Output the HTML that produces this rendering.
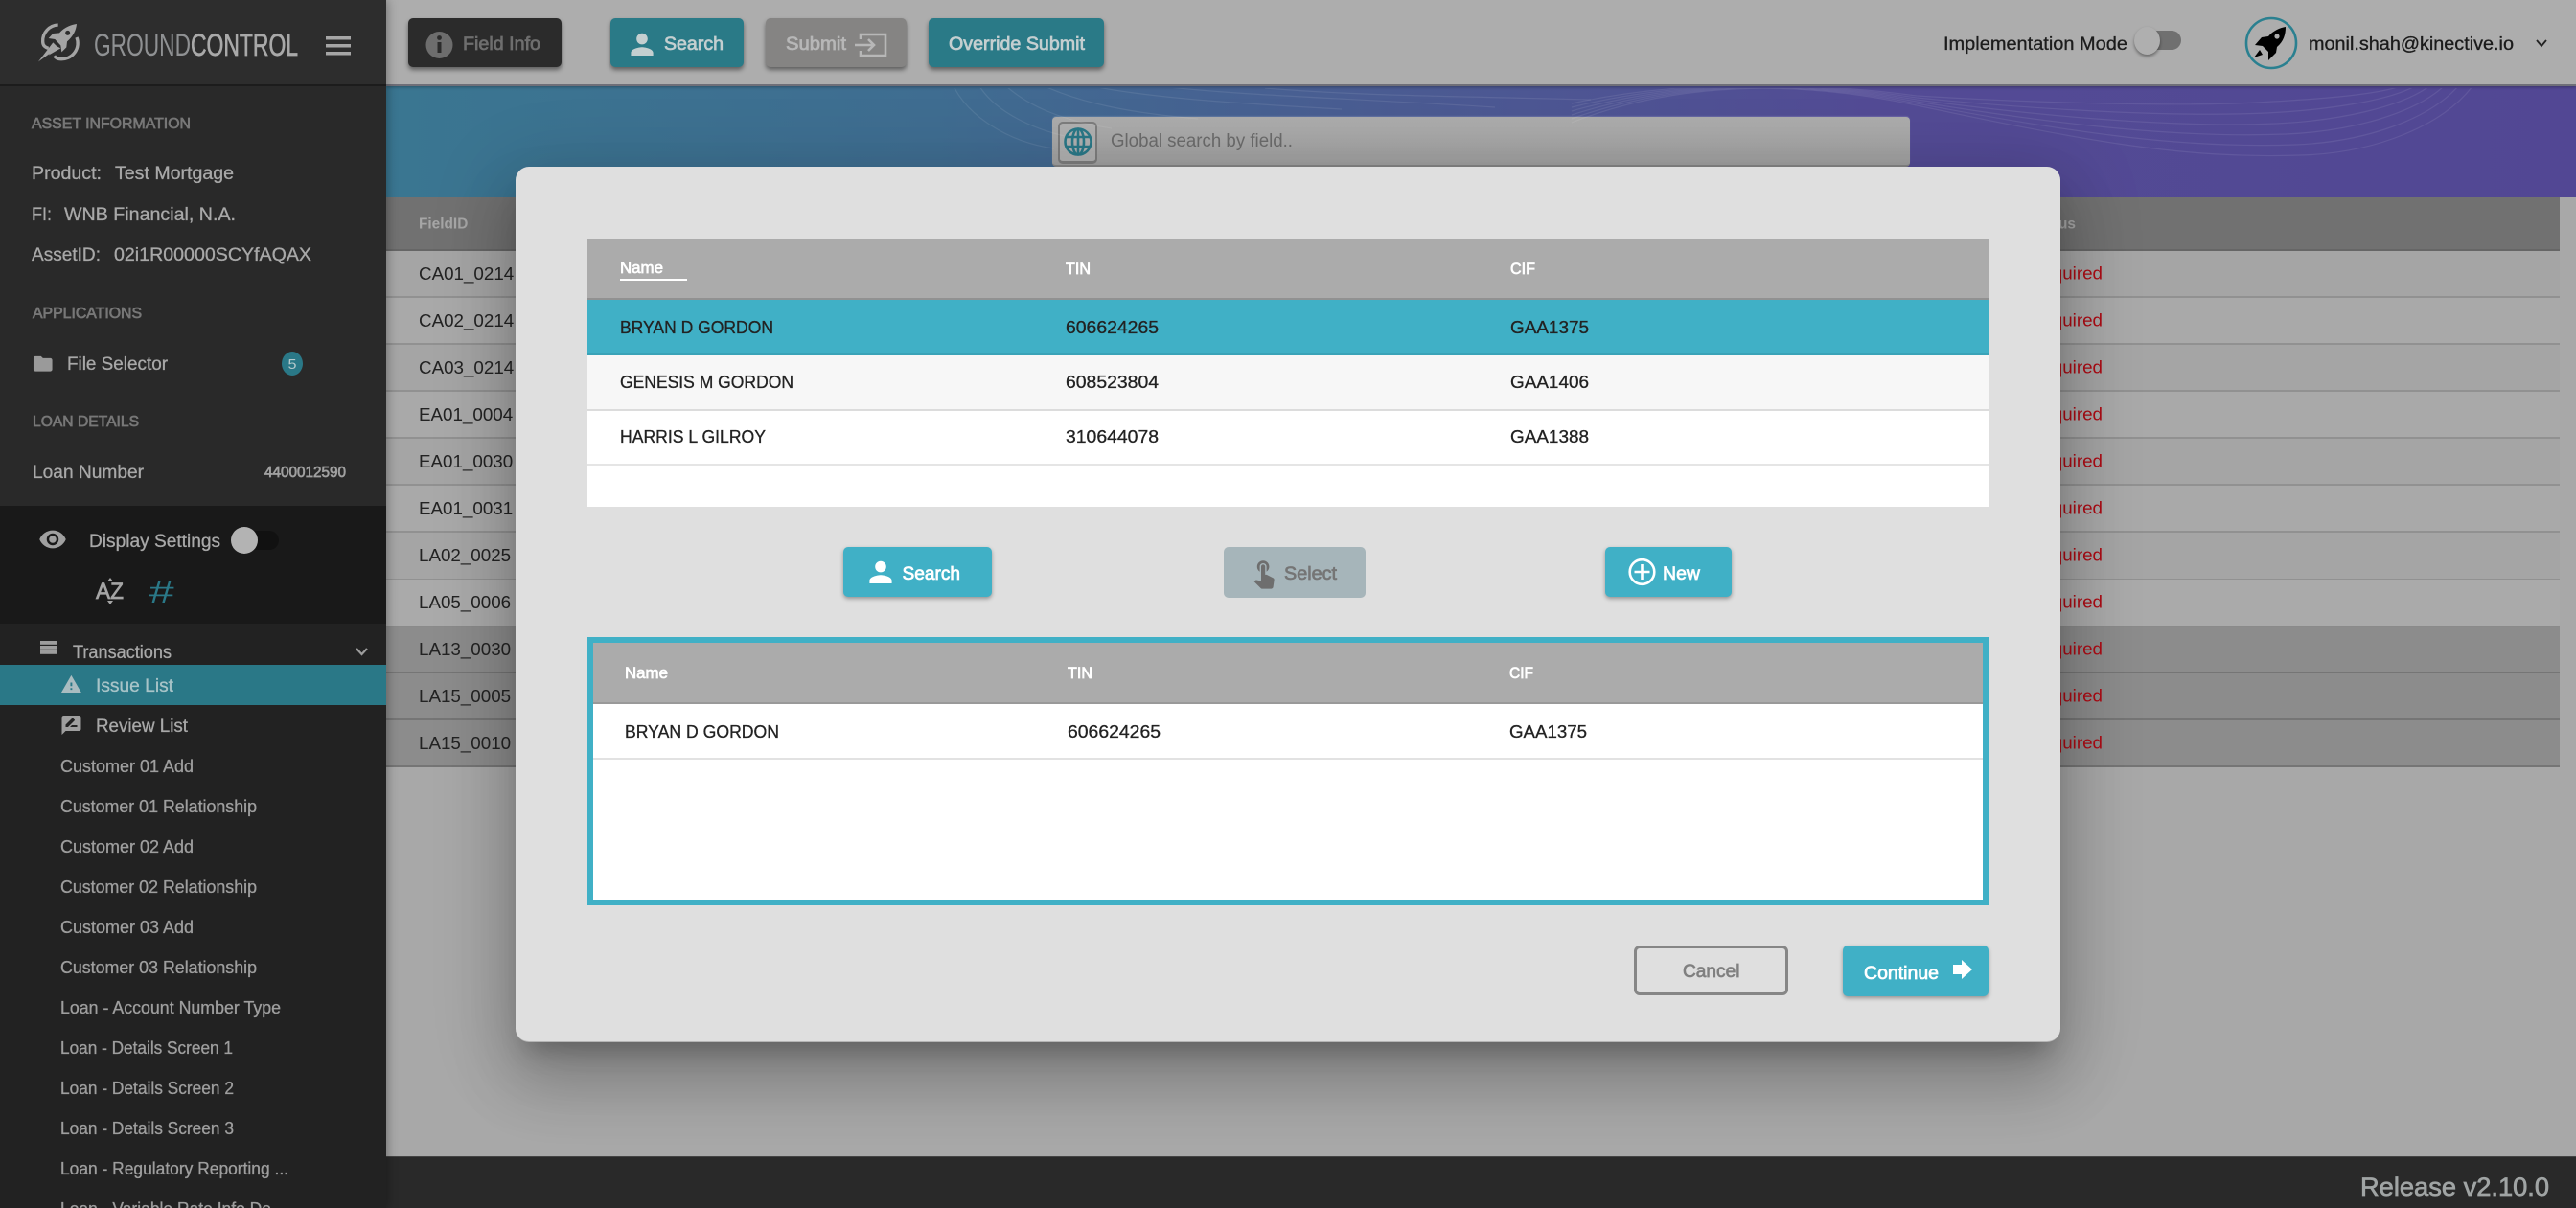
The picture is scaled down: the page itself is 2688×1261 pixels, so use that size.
<!DOCTYPE html>
<html lang="en"><head><meta charset="utf-8"><title>GroundControl</title>
<style>
html,body{margin:0;padding:0;width:2688px;height:1261px;overflow:hidden;background:#a8a8a8}
body{position:relative;font-family:"Liberation Sans",sans-serif}
.b{position:absolute;box-sizing:border-box}
svg.l{position:absolute;left:0;top:0}
svg text{font-family:"Liberation Sans",sans-serif}
.m{stroke-width:.7px;paint-order:stroke}
.r{stroke-width:.3px;paint-order:stroke}
</style></head><body>

<!-- main -->
<div class="b" style="left:403px;top:90px;width:2285px;height:116px;background:linear-gradient(90deg,#3a7691 0%,#3f6d91 25%,#4a5c92 45%,#534b95 68%,#524794 100%)"></div>
<div class="b" style="left:403px;top:206px;width:2268px;height:56px;background:#717171;border-bottom:2px solid #666"></div>
<div class="b" style="left:403px;top:262px;width:2268px;height:49px;background:#a5a5a5;border-bottom:2px solid #919191"></div>
<div class="b" style="left:403px;top:311px;width:2268px;height:49px;background:#a9a9a9;border-bottom:2px solid #919191"></div>
<div class="b" style="left:403px;top:360px;width:2268px;height:49px;background:#a5a5a5;border-bottom:2px solid #919191"></div>
<div class="b" style="left:403px;top:409px;width:2268px;height:49px;background:#a9a9a9;border-bottom:2px solid #919191"></div>
<div class="b" style="left:403px;top:458px;width:2268px;height:49px;background:#a5a5a5;border-bottom:2px solid #919191"></div>
<div class="b" style="left:403px;top:507px;width:2268px;height:49px;background:#a9a9a9;border-bottom:2px solid #919191"></div>
<div class="b" style="left:403px;top:556px;width:2268px;height:49px;background:#a5a5a5;border-bottom:1px solid #919191"></div>
<div class="b" style="left:403px;top:605px;width:2268px;height:49px;background:#aaaaaa;border-bottom:1px solid #8a8a8a"></div>
<div class="b" style="left:403px;top:654px;width:2268px;height:49px;background:#8c8c8c;border-bottom:2px solid #757575"></div>
<div class="b" style="left:403px;top:703px;width:2268px;height:49px;background:#8c8c8c;border-bottom:2px solid #757575"></div>
<div class="b" style="left:403px;top:752px;width:2268px;height:49px;background:#8c8c8c;border-bottom:2px solid #757575"></div>

<!-- footer -->
<div class="b" style="left:403px;top:1207px;width:2285px;height:54px;background:#292929;border-top:1px solid #444"></div>

<!-- header -->
<div class="b" style="left:403px;top:0;width:2285px;height:90px;background:#adadad;border-bottom:2px solid #6f6f78;box-shadow:0 1px 3px rgba(0,0,0,.3)"></div>
<div class="b" style="left:426px;top:19px;width:160px;height:51px;background:#2b2b2b;border-radius:5px;box-shadow:0 3px 5px rgba(0,0,0,.45)"></div>
<div class="b" style="left:637px;top:19px;width:139px;height:51px;background:#2a7a87;border-radius:5px;box-shadow:0 3px 5px rgba(0,0,0,.45)"></div>
<div class="b" style="left:799px;top:19px;width:147px;height:51px;background:#858483;border-radius:5px;box-shadow:0 3px 5px rgba(0,0,0,.45)"></div>
<div class="b" style="left:969px;top:19px;width:183px;height:51px;background:#2a7a87;border-radius:5px;box-shadow:0 3px 5px rgba(0,0,0,.45)"></div>
<div class="b" style="left:2240px;top:32px;width:36px;height:20px;background:#707070;border-radius:10px"></div>
<div class="b" style="left:2227px;top:28px;width:27px;height:29px;background:#afafaf;border-radius:50%;box-shadow:0 2px 3px rgba(0,0,0,.4)"></div>

<!-- global search -->
<div class="b" style="left:1098px;top:122px;width:895px;height:52px;background:linear-gradient(#adadad,#a1a1a1);border-radius:4px;border-bottom:2px solid #858585;box-shadow:0 -1px 1px rgba(255,255,255,.15)"></div>
<div class="b" style="left:1104px;top:127px;width:41px;height:44px;background:#b0b0b0;border-radius:5px;border:2px solid #7d7d7d;border-bottom-width:3px"></div>

<!-- sidebar -->
<div class="b" style="left:0;top:0;width:403px;height:1261px;background:#222;box-shadow:1px 0 10px rgba(0,0,0,.35)"></div>
<div class="b" style="left:0;top:0;width:403px;height:90px;background:#2d2d2d;border-bottom:2px solid #1c1c1c"></div>
<div class="b" style="left:0;top:90px;width:403px;height:438px;background:#292929"></div>
<div class="b" style="left:0;top:528px;width:403px;height:123px;background:#191919"></div>
<div class="b" style="left:0;top:694px;width:403px;height:42px;background:#2a7887"></div>
<div class="b" style="left:246px;top:554px;width:45px;height:20px;background:#111;border-radius:10px"></div>
<div class="b" style="left:241px;top:550px;width:28px;height:28px;background:#b3b3b3;border-radius:50%"></div>
<div class="b" style="left:294px;top:367px;width:22px;height:25px;background:#2a7887;border-radius:50%"></div>

<svg class="l" width="2688" height="1261" viewBox="0 0 2688 1261">
<defs><clipPath id="bn"><rect x="403" y="92" width="2285" height="114"/></clipPath><clipPath id="pg"><rect x="0" y="0" width="403" height="1261"/></clipPath></defs>

<!-- banner waves -->
<g clip-path="url(#bn)" fill="none" stroke="#fff" stroke-opacity=".085" stroke-width="1.2">
<path d="M1640 128C1750 84 1880 84 2000 110C2180 148 2280 166 2400 162C2480 160 2550 130 2580 90"/>
<path d="M1640 124C1750 84 1880 84 2000 108C2170 140 2280 155 2395 151C2470 148 2535 124 2565 90"/>
<path d="M1640 120C1750 84 1880 84 2000 106C2160 132 2280 144 2385 140C2455 137 2520 118 2550 90"/>
<path d="M1640 116C1750 84 1880 84 2000 104C2150 124 2280 133 2375 129C2440 126 2505 112 2535 90"/>
<path d="M1640 112C1750 84 1880 84 2000 102C2140 116 2280 122 2365 118C2425 115 2490 106 2520 90"/>
<path d="M1640 108C1750 84 1880 84 2000 100C2130 108 2280 111 2355 107C2410 104 2475 100 2505 90"/>
<path d="M995 90C1010 120 1050 148 1100 155"/>
<path d="M1022 90C1040 118 1080 136 1120 144"/>
<path d="M1050 90C1075 112 1110 126 1160 134"/>
<path d="M1090 90C1130 108 1180 118 1250 124"/>
<path d="M1140 90C1200 102 1290 108 1400 114"/>
<path d="M1210 90C1300 100 1400 102 1560 112"/>
<path d="M1320 92C1420 100 1500 100 1660 104"/>
</g>

<!-- table -->
<text x="437" y="238.5" font-size="15.4" font-weight="700" fill="#a6a6a6">FieldID</text>
<text x="2166" y="238.5" font-size="15.4" font-weight="700" fill="#a6a6a6" text-anchor="end">Status</text>
<g font-size="18.8" fill="#232323">
<text x="437" y="292">CA01_0214</text><text x="437" y="341">CA02_0214</text><text x="437" y="390">CA03_0214</text>
<text x="437" y="439">EA01_0004</text><text x="437" y="488">EA01_0030</text><text x="437" y="537">EA01_0031</text>
<text x="437" y="586">LA02_0025</text><text x="437" y="635">LA05_0006</text><text x="437" y="684">LA13_0030</text>
<text x="437" y="733">LA15_0005</text><text x="437" y="782">LA15_0010</text>
</g>
<g font-size="18.8" fill="#ad0b14" text-anchor="end">
<text x="2194" y="291.500">Required</text><text x="2194" y="340.500">Required</text><text x="2194" y="389.500">Required</text>
<text x="2194" y="438.500">Required</text><text x="2194" y="487.500">Required</text><text x="2194" y="536.500">Required</text>
<text x="2194" y="585.500">Required</text><text x="2194" y="634.500">Required</text><text x="2194" y="683.500">Required</text>
<text x="2194" y="732.500">Required</text><text x="2194" y="781.500">Required</text>
</g>

<!-- footer text -->
<text x="2463" y="1248" font-size="27" textLength="197" lengthAdjust="spacingAndGlyphs" fill="#a0a4a4" stroke="#a0a4a4" class="m">Release v2.10.0</text>

<!-- header buttons -->
<circle cx="458.5" cy="47" r="14" fill="#6d6d6d"/>
<rect x="456.5" y="44" width="4" height="11" fill="#2b2b2b"/><circle cx="458.5" cy="39.5" r="2.4" fill="#2b2b2b"/>
<text x="483" y="52" font-size="19" textLength="81" lengthAdjust="spacingAndGlyphs" fill="#6e6e6e" stroke="#6e6e6e" class="m">Field Info</text>

<path transform="translate(652.6 29) scale(1.45)" fill="#c4cfd0" d="M12 12c2.21 0 4-1.79 4-4s-1.79-4-4-4-4 1.79-4 4 1.79 4 4 4zm0 2c-2.67 0-8 1.34-8 4v2h16v-2c0-2.66-5.33-4-8-4z"/>
<text x="693" y="52" font-size="19" textLength="62" lengthAdjust="spacingAndGlyphs" fill="#c4cfd0" stroke="#c4cfd0" class="m">Search</text>

<text x="820" y="52" font-size="19" textLength="63" lengthAdjust="spacingAndGlyphs" fill="#b7b7b7" stroke="#b7b7b7" class="m">Submit</text>
<g fill="none" stroke="#b7b7b7" stroke-width="2.6">
<path d="M898 41V36H924V58H898V53"/><path d="M892 47H912M906 41L912 47L906 53"/>
</g>

<text x="990" y="52" font-size="19" textLength="142" lengthAdjust="spacingAndGlyphs" fill="#c4cfd0" stroke="#c4cfd0" class="m">Override Submit</text>

<!-- globe -->
<g fill="none" stroke="#2a7887" stroke-width="2.6">
<circle cx="1125" cy="148" r="13.5"/><ellipse cx="1125" cy="148" rx="6" ry="13.5"/><path d="M1125 134.500V161.500M1112 143H1138M1112 153H1138"/>
</g>
<text x="1159" y="153" font-size="19" textLength="190" lengthAdjust="spacingAndGlyphs" fill="#6b6b6b">Global search by field..</text>

<!-- header right -->
<text x="2028" y="52" font-size="19" textLength="192" lengthAdjust="spacingAndGlyphs" fill="#1c1c1c" stroke="#1c1c1c" class="r">Implementation Mode</text>
<circle cx="2370" cy="45" r="26" fill="none" stroke="#2a8090" stroke-width="2.6"/>
<path d="M2385 28C2379 29 2372 32 2367 38L2360 39L2353 47L2361 48L2367 54L2367 63L2375 55L2376 49C2383 43 2385 36 2385 28Z" fill="#000"/>
<circle cx="2376" cy="38" r="2.600" fill="#adadad"/>
<path d="M2358 52L2352 60L2361 57Z" fill="#000"/>
<text x="2409" y="52" font-size="19" textLength="214" lengthAdjust="spacingAndGlyphs" fill="#1a1a1a" stroke="#1a1a1a" class="r">monil.shah@kinective.io</text>
<path d="M2647 42L2652 48L2657 42" fill="none" stroke="#222" stroke-width="1.8"/>

<!-- logo -->
<g transform="translate(30 15) scale(.3333)">
<path d="M150 30C135 32 112 40 96 58L76 60L62 75L82 78L100 97L103 118L118 103L120 85C140 68 148 50 150 30Z" fill="#a4a4a4"/>
<circle cx="122" cy="58" r="7.500" fill="#2d2d2d"/>
<path d="M76 88L30 148L92 104ZM84 98L62 128L100 106Z" fill="#a4a4a4"/>
<path d="M92 33A50 50 0 0 0 44 85C44 96 50 103 62 106" fill="none" stroke="#a4a4a4" stroke-width="10"/>
<path d="M150 72A50 50 0 0 1 100 140C92 140 84 136 80 130" fill="none" stroke="#a4a4a4" stroke-width="10"/>
</g>
<text x="98" y="58" font-size="32" textLength="101" lengthAdjust="spacingAndGlyphs" fill="#8f9193">GROUND</text>
<text x="199" y="58" font-size="32" textLength="112" lengthAdjust="spacingAndGlyphs" fill="#a9a9a9" stroke="#a9a9a9" class="m">CONTROL</text>
<g fill="#a6a6a6"><rect x="340" y="38" width="26" height="3.500"/><rect x="340" y="46" width="26" height="3.500"/><rect x="340" y="54" width="26" height="3.500"/></g>

<!-- sidebar text -->
<g clip-path="url(#pg)">
<g font-size="15.5" fill="#777" stroke="#777" class="m">
<text x="33" y="134" textLength="166" lengthAdjust="spacingAndGlyphs">ASSET INFORMATION</text>
<text x="34" y="332" textLength="114" lengthAdjust="spacingAndGlyphs">APPLICATIONS</text>
<text x="34" y="445" textLength="111" lengthAdjust="spacingAndGlyphs">LOAN DETAILS</text>
</g>
<g font-size="19" fill="#a8a8a8" stroke="#a8a8a8" class="r">
<text x="33" y="187" textLength="73" lengthAdjust="spacingAndGlyphs">Product:</text>
<text x="120" y="187" textLength="124" lengthAdjust="spacingAndGlyphs">Test Mortgage</text>
<text x="33" y="230" textLength="21" lengthAdjust="spacingAndGlyphs">FI:</text>
<text x="67" y="230" textLength="179" lengthAdjust="spacingAndGlyphs">WNB Financial, N.A.</text>
<text x="33" y="272" textLength="72" lengthAdjust="spacingAndGlyphs">AssetID:</text>
<text x="119" y="272" textLength="206" lengthAdjust="spacingAndGlyphs">02i1R00000SCYfAQAX</text>
<text x="70" y="386" textLength="105" lengthAdjust="spacingAndGlyphs">File Selector</text>
<text x="34" y="499" textLength="116" lengthAdjust="spacingAndGlyphs">Loan Number</text>
<text x="93" y="571" textLength="137" lengthAdjust="spacingAndGlyphs">Display Settings</text>
<text x="76" y="687" textLength="103" lengthAdjust="spacingAndGlyphs">Transactions</text>
<text x="100" y="764" textLength="96" lengthAdjust="spacingAndGlyphs">Review List</text>
</g>
<text x="100" y="722" font-size="19" textLength="81" lengthAdjust="spacingAndGlyphs" fill="#a8c4c8" stroke="#a8c4c8" class="r">Issue List</text>
<text x="276" y="498" font-size="15.500" textLength="85" lengthAdjust="spacingAndGlyphs" fill="#a0a0a0" stroke="#a0a0a0" class="m">4400012590</text>
<text x="305" y="385" font-size="14.500" text-anchor="middle" textLength="9" lengthAdjust="spacingAndGlyphs" fill="#b4c9cc">5</text>

<path transform="translate(33 368) scale(.98)" fill="#9a9a9a" d="M10 4H4c-1.100 0-1.990.9-1.990 2L2 18c0 1.100.9 2 2 2h16c1.100 0 2-.9 2-2V8c0-1.100-.9-2-2-2h-8l-2-2z"/>
<path transform="translate(40 548) scale(1.25)" fill="#a0a0a0" d="M12 4.500C7 4.500 2.730 7.610 1 12c1.730 4.390 6 7.500 11 7.500s9.270-3.110 11-7.500c-1.730-4.390-6-7.500-11-7.500zM12 17c-2.760 0-5-2.240-5-5s2.240-5 5-5 5 2.240 5 5-2.240 5-5 5zm0-8c-1.660 0-3 1.340-3 3s1.340 3 3 3 3-1.340 3-3-1.340-3-3-3z"/>
<text x="100" y="625" font-size="24" textLength="29" lengthAdjust="spacingAndGlyphs" fill="#a5a5a5" stroke="#a5a5a5" class="m">AZ</text>
<path d="M112 607L115 603L118 607ZM112 627L115 631L118 627Z" fill="#a5a5a5"/>
<text x="155" y="629" font-size="33" font-style="italic" textLength="26" lengthAdjust="spacingAndGlyphs" fill="#2a7887">#</text>
<g fill="#9d9d9d">
<rect x="42" y="669" width="17" height="3.800"/><rect x="42" y="674" width="17" height="3.800"/><rect x="42" y="679" width="17" height="3.800"/>
</g>
<path d="M372 677L377.500 683L383 677" fill="none" stroke="#9d9d9d" stroke-width="2.200"/>
<path transform="translate(63 703) scale(.95)" fill="#a9bcc0" fill-rule="evenodd" d="M1 21h22L12 2 1 21zm12-3h-2v-2h2v2zm0-4h-2v-4h2v4z"/>
<path transform="translate(62.500 745) scale(1)" fill="#9f9f9f" fill-rule="evenodd" d="M20 2H4c-1.100 0-2 .9-2 2v18l4-4h14c1.100 0 2-.9 2-2V4c0-1.100-.9-2-2-2zM6 14v-2.470l6.880-6.880c.2-.2.510-.2.710 0l1.770 1.770c.2.2.2.510 0 .710L8.470 14H6zm12 0h-7.500l2-2H18v2z"/>
<g font-size="18" fill="#9e9e9e" stroke="#9e9e9e" class="r">
<text x="63" y="806" textLength="139" lengthAdjust="spacingAndGlyphs">Customer 01 Add</text>
<text x="63" y="848" textLength="205" lengthAdjust="spacingAndGlyphs">Customer 01 Relationship</text>
<text x="63" y="890" textLength="139" lengthAdjust="spacingAndGlyphs">Customer 02 Add</text>
<text x="63" y="932" textLength="205" lengthAdjust="spacingAndGlyphs">Customer 02 Relationship</text>
<text x="63" y="974" textLength="139" lengthAdjust="spacingAndGlyphs">Customer 03 Add</text>
<text x="63" y="1016" textLength="205" lengthAdjust="spacingAndGlyphs">Customer 03 Relationship</text>
<text x="63" y="1058" textLength="230" lengthAdjust="spacingAndGlyphs">Loan - Account Number Type</text>
<text x="63" y="1100" textLength="180" lengthAdjust="spacingAndGlyphs">Loan - Details Screen 1</text>
<text x="63" y="1142" textLength="181" lengthAdjust="spacingAndGlyphs">Loan - Details Screen 2</text>
<text x="63" y="1184" textLength="181" lengthAdjust="spacingAndGlyphs">Loan - Details Screen 3</text>
<text x="63" y="1226" textLength="238" lengthAdjust="spacingAndGlyphs">Loan - Regulatory Reporting ...</text>
<text x="63" y="1268" textLength="220" lengthAdjust="spacingAndGlyphs">Loan - Variable Rate Info De</text>
</g>
</g>
</svg>

<!-- modal -->
<div class="b" style="left:538px;top:174px;width:1612px;height:914px;background:#dfdfdf;border-radius:14px;box-shadow:0 19px 26px -12px rgba(0,0,0,.25),0 41px 65px 5px rgba(0,0,0,.16),0 15px 79px 14px rgba(0,0,0,.14);border-bottom:1px solid #b5b5b5"></div>
<div class="b" style="left:613px;top:249px;width:1462px;height:64px;background:#ababab;border-bottom:2px solid #919191"></div>
<div class="b" style="left:613px;top:313px;width:1462px;height:58px;background:#40b0c6;border-bottom:2px solid #3aa3b8"></div>
<div class="b" style="left:613px;top:371px;width:1462px;height:58px;background:#f7f7f7;border-bottom:2px solid #dcdcdc"></div>
<div class="b" style="left:613px;top:429px;width:1462px;height:57px;background:#fff;border-bottom:2px solid #e5e5e5"></div>
<div class="b" style="left:613px;top:486px;width:1462px;height:43px;background:#fff"></div>
<div class="b" style="left:647px;top:291px;width:70px;height:2px;background:#fff"></div>
<div class="b" style="left:880px;top:571px;width:155px;height:52px;background:#40b0c6;border-radius:5px;box-shadow:0 2px 4px rgba(0,0,0,.35)"></div>
<div class="b" style="left:1277px;top:571px;width:148px;height:53px;background:#a6b5ba;border-radius:5px"></div>
<div class="b" style="left:1675px;top:571px;width:132px;height:52px;background:#40b0c6;border-radius:5px;box-shadow:0 2px 4px rgba(0,0,0,.35)"></div>
<div class="b" style="left:613px;top:665px;width:1462px;height:280px;background:#fff;border:6px solid #40b0c6"></div>
<div class="b" style="left:619px;top:671px;width:1450px;height:64px;background:#ababab;border-bottom:2px solid #999"></div>
<div class="b" style="left:619px;top:791px;width:1450px;height:2px;background:#e2e2e2"></div>
<div class="b" style="left:1705px;top:987px;width:161px;height:52px;background:#dfdfdf;border:3px solid #868686;border-radius:6px"></div>
<div class="b" style="left:1923px;top:987px;width:152px;height:53px;background:#40b0c6;border-radius:5px;box-shadow:0 2px 4px rgba(0,0,0,.35)"></div>

<svg class="l" width="2688" height="1261" viewBox="0 0 2688 1261">
<g font-size="17" fill="#fff" stroke="#fff" class="m">
<text x="647" y="285" textLength="45" lengthAdjust="spacingAndGlyphs">Name</text>
<text x="1112" y="286" textLength="26" lengthAdjust="spacingAndGlyphs">TIN</text>
<text x="1576" y="286" textLength="26" lengthAdjust="spacingAndGlyphs">CIF</text>
<text x="652" y="708" textLength="45" lengthAdjust="spacingAndGlyphs">Name</text>
<text x="1114" y="708" textLength="26" lengthAdjust="spacingAndGlyphs">TIN</text>
<text x="1575" y="708" textLength="25" lengthAdjust="spacingAndGlyphs">CIF</text>
</g>
<g font-size="18.8" fill="#222" stroke="#222" class="r">
<text x="647" y="348" textLength="160" lengthAdjust="spacingAndGlyphs">BRYAN D GORDON</text>
<text x="1112" y="348" textLength="97" lengthAdjust="spacingAndGlyphs">606624265</text>
<text x="1576" y="348" textLength="82" lengthAdjust="spacingAndGlyphs">GAA1375</text>
<text x="647" y="405" textLength="181" lengthAdjust="spacingAndGlyphs">GENESIS M GORDON</text>
<text x="1112" y="405" textLength="97" lengthAdjust="spacingAndGlyphs">608523804</text>
<text x="1576" y="405" textLength="82" lengthAdjust="spacingAndGlyphs">GAA1406</text>
<text x="647" y="462" textLength="152" lengthAdjust="spacingAndGlyphs">HARRIS L GILROY</text>
<text x="1112" y="462" textLength="97" lengthAdjust="spacingAndGlyphs">310644078</text>
<text x="1576" y="462" textLength="82" lengthAdjust="spacingAndGlyphs">GAA1388</text>
<text x="652" y="770" textLength="161" lengthAdjust="spacingAndGlyphs">BRYAN D GORDON</text>
<text x="1114" y="770" textLength="97" lengthAdjust="spacingAndGlyphs">606624265</text>
<text x="1575" y="770" textLength="81" lengthAdjust="spacingAndGlyphs">GAA1375</text>
</g>
<path transform="translate(901.600 580) scale(1.45)" fill="#fff" d="M12 12c2.210 0 4-1.790 4-4s-1.790-4-4-4-4 1.790-4 4 1.790 4 4 4zm0 2c-2.670 0-8 1.340-8 4v2h16v-2c0-2.660-5.330-4-8-4z"/>
<text x="941.500" y="605" font-size="19" textLength="60.500" lengthAdjust="spacingAndGlyphs" fill="#fff" stroke="#fff" class="m">Search</text>
<path transform="translate(1302 581) scale(1.4)" fill="#6e6e6e" d="M9 11.240V7.500C9 6.120 10.120 5 11.500 5S14 6.120 14 7.500v3.740c1.210-.81 2-2.180 2-3.740C16 5.010 13.990 3 11.500 3S7 5.010 7 7.500c0 1.560.79 2.930 2 3.740zm9.840 4.630l-4.540-2.260c-.17-.07-.35-.11-.54-.11H13v-6c0-.83-.67-1.500-1.500-1.500S10 6.670 10 7.500v10.740l-3.430-.72c-.08-.01-.15-.03-.24-.03-.31 0-.59.13-.79.33l-.79.8 4.940 4.940c.27.27.65.44 1.060.44h6.790c.75 0 1.330-.55 1.440-1.280l.75-5.270c.01-.07.02-.14.02-.2 0-.62-.38-1.160-.91-1.380z"/>
<text x="1340" y="605" font-size="19" textLength="55" lengthAdjust="spacingAndGlyphs" fill="#757575" stroke="#757575" class="m">Select</text>
<circle cx="1713.500" cy="597" r="12.800" fill="none" stroke="#fff" stroke-width="2.600"/>
<path d="M1713.500 589V605M1705.500 597H1721.500" stroke="#fff" stroke-width="2.600"/>
<text x="1735" y="605" font-size="19" textLength="39" lengthAdjust="spacingAndGlyphs" fill="#fff" stroke="#fff" class="m">New</text>
<text x="1756" y="1020" font-size="19" textLength="59.500" lengthAdjust="spacingAndGlyphs" fill="#808080" stroke="#808080" class="m">Cancel</text>
<text x="1945" y="1022" font-size="19" textLength="78" lengthAdjust="spacingAndGlyphs" fill="#fff" stroke="#fff" class="m">Continue</text>
<path d="M2038 1007H2047V1002L2058 1012L2047 1022V1017H2038Z" fill="#fff"/>
</svg>
</body></html>
